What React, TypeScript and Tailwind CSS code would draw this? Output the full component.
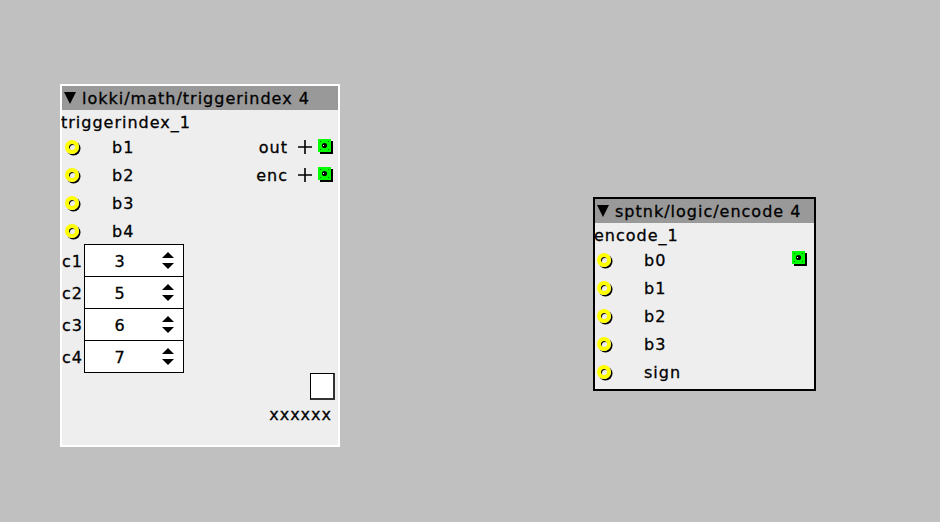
import React from 'react';

const FONT =
  "font-['DejaVu_Sans',sans-serif] text-[16px] tracking-[1px] text-black leading-none [-webkit-text-stroke:0.3px_#000]";

const Inlet: React.FC = () => (
  <div className="w-[14px] h-[14px] rounded-full border-[4px] border-[#ffff00] shadow-[1.5px_1.5px_0_#000,inset_1px_1px_0_#000]" />
);

const Outlet: React.FC = () => (
  <svg width="16" height="16" viewBox="0 0 16 16">
    <rect x="2" y="2" width="13" height="13" fill="#000" />
    <rect x="0" y="0" width="13" height="13" fill="#00ff00" />
    <rect x="2" y="2" width="1" height="1" fill="#006600" />
    <rect x="10" y="2" width="1" height="1" fill="#006600" />
    <rect x="2" y="10" width="1" height="1" fill="#006600" />
    <rect x="10" y="10" width="1" height="1" fill="#006600" />
    <circle cx="6.5" cy="6.5" r="2.6" fill="#000" />
    <rect x="5" y="6" width="1" height="1" fill="#fff" />
  </svg>
);

const Plus: React.FC = () => (
  <svg width="14" height="14" viewBox="0 0 14 14">
    <path d="M0 7H14M7 0V14" stroke="#000" strokeWidth="1.6" />
  </svg>
);

const Spin: React.FC = () => (
  <svg width="12" height="17" viewBox="0 0 12 17">
    <path d="M0 6L6 0L12 6Z" fill="#000" />
    <path d="M0 11L6 17L12 11Z" fill="#000" />
  </svg>
);

const Header: React.FC<{ title: string }> = ({ title }) => (
  <div className="h-[24px] bg-[#999999] flex items-center pl-[2px] shrink-0">
    <svg width="12" height="12" viewBox="0 0 12 12">
      <path d="M0 0H12L6 12Z" fill="#000" />
    </svg>
    <span className={`${FONT} ml-[6px] pt-[2px]`}>{title}</span>
  </div>
);

const InletRow: React.FC<{ label: string }> = ({ label }) => (
  <div className="h-[28px] flex items-center">
    <div className="w-[50px] pl-[3px] flex items-center">
      <Inlet />
    </div>
    <span className={`${FONT} pt-[2px]`}>{label}</span>
  </div>
);

const OutletRow: React.FC<{ label: string }> = ({ label }) => (
  <div className="h-[28px] flex items-center">
    <span className={`${FONT} pt-[2px]`}>{label}</span>
    <span className="ml-[10px] flex items-center">
      <Plus />
    </span>
    <span className="ml-[6px] flex items-center">
      <Outlet />
    </span>
  </div>
);

const params = [
  { name: 'c1', value: 3 },
  { name: 'c2', value: 5 },
  { name: 'c3', value: 6 },
  { name: 'c4', value: 7 },
];

export default function App() {
  return (
    <div className="relative w-[940px] h-[522px] bg-[#c0c0c0] overflow-hidden">
      {/* lokki/math/triggerindex */}
      <div className="absolute left-[60px] top-[84px] w-[280px] h-[363px] border-2 border-white bg-[#eeeeee] flex flex-col">
        <Header title="lokki/math/triggerindex 4" />
        <div className={`h-[23px] flex items-center -ml-px pt-[2px] ${FONT}`}>triggerindex_1</div>
        <div className="flex justify-between">
          <div className="flex flex-col">
            {['b1', 'b2', 'b3', 'b4'].map((b) => (
              <InletRow key={b} label={b} />
            ))}
          </div>
          <div className="flex flex-col items-end pr-[4px]">
            <OutletRow label="out" />
            <OutletRow label="enc" />
          </div>
        </div>
        <div className="flex flex-col -mt-px">
          {params.map((p, i) => (
            <div key={p.name} className={`flex items-center ${i > 0 ? '-mt-px' : ''}`}>
              <span className={`${FONT} w-[22px] tracking-[0px] pt-[2px]`}>{p.name}</span>
              <div className="w-[100px] h-[33px] bg-white border border-black flex items-center">
                <span className={`${FONT} w-[70px] text-center pt-[2px]`}>{p.value}</span>
                <span className="ml-[7px] flex items-center">
                  <Spin />
                </span>
              </div>
            </div>
          ))}
        </div>
        <div className="flex justify-end pr-[3px]">
          <div className="w-[25px] h-[27px] bg-white border border-black border-r-2 border-b-2 border-r-[#333] border-b-[#333]" />
        </div>
        <div className={`${FONT} text-right pr-[6px] mt-[7px]`}>xxxxxx</div>
      </div>

      {/* sptnk/logic/encode */}
      <div className="absolute left-[593px] top-[197px] w-[223px] h-[194px] border-2 border-black bg-[#eeeeee] flex flex-col">
        <Header title="sptnk/logic/encode 4" />
        <div className={`h-[23px] flex items-center -ml-px pt-[2px] ${FONT}`}>encode_1</div>
        <div className="flex justify-between">
          <div className="flex flex-col -ml-px">
            {['b0', 'b1', 'b2', 'b3', 'sign'].map((b) => (
              <InletRow key={b} label={b} />
            ))}
          </div>
          <div className="flex flex-col items-end pr-[6px]">
            <div className="h-[28px] flex items-start pt-[5px]">
              <Outlet />
            </div>
          </div>
        </div>
      </div>
    </div>
  );
}
